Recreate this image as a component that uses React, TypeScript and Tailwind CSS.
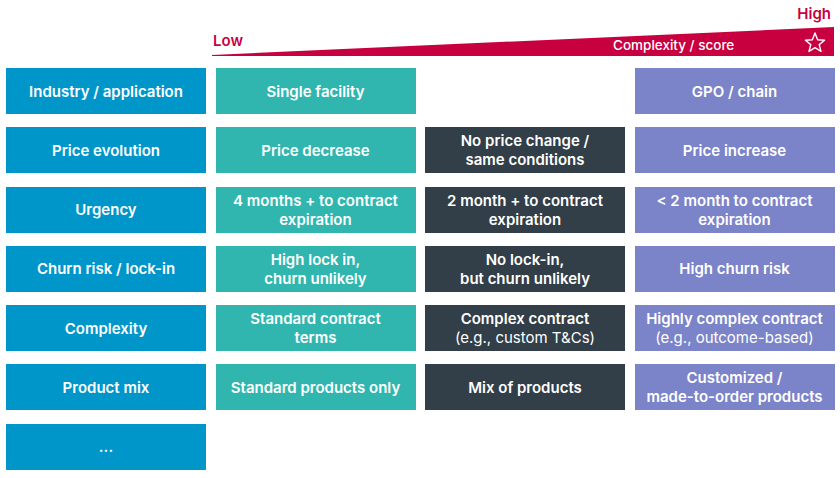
import type { ReactNode } from 'react'

const blue = 'bg-[#0096ca]'
const teal = 'bg-[#30b6af]'
const dark = 'bg-[#323e48]'
const purple = 'bg-[#7b83c9]'

type Cell = { text: ReactNode; color: string } | null

const rows: Cell[][] = [
  [
    { text: 'Industry / application', color: blue },
    { text: 'Single facility', color: teal },
    null,
    { text: 'GPO / chain', color: purple },
  ],
  [
    { text: 'Price evolution', color: blue },
    { text: 'Price decrease', color: teal },
    { text: <>No price change /<br />same conditions</>, color: dark },
    { text: 'Price increase', color: purple },
  ],
  [
    { text: 'Urgency', color: blue },
    { text: <>4 months + to contract<br />expiration</>, color: teal },
    { text: <>2 month + to contract<br />expiration</>, color: dark },
    { text: <>&lt; 2 month to contract<br />expiration</>, color: purple },
  ],
  [
    { text: 'Churn risk / lock-in', color: blue },
    { text: <>High lock in,<br />churn unlikely</>, color: teal },
    { text: <>No lock-in,<br />but churn unlikely</>, color: dark },
    { text: 'High churn risk', color: purple },
  ],
  [
    { text: 'Complexity', color: blue },
    { text: <>Standard contract<br />terms</>, color: teal },
    {
      text: <>Complex contract<br /><span className="font-normal">(e.g., custom T&amp;Cs)</span></>,
      color: dark,
    },
    {
      text: <>Highly complex contract<br /><span className="font-normal">(e.g., outcome-based)</span></>,
      color: purple,
    },
  ],
  [
    { text: 'Product mix', color: blue },
    { text: 'Standard products only', color: teal },
    { text: 'Mix of products', color: dark },
    { text: <>Customized /<br />made-to-order products</>, color: purple },
  ],
  [{ text: '...', color: blue }, null, null, null],
]

function Header() {
  return (
    <div className="relative h-[56px] ml-[212px] mr-[6px]">
      <svg className="absolute inset-0" width="622" height="56" viewBox="0 0 622 56">
        <polygon points="0,55 622,27 622,56 0,56" fill="#c8003f" />
        <polygon
          points="603,33 605.6,39.7 612.6,40.2 607.2,44.6 609,51.4 603,47.6 597,51.4 598.8,44.6 593.4,40.2 600.4,39.7"
          fill="none"
          stroke="#ffffff"
          strokeWidth="1.4"
          strokeLinejoin="round"
        />
      </svg>
      <span className="absolute left-[1px] top-[30px] text-[15px] font-semibold text-[#c8003f]">Low</span>
      <span className="absolute right-[3px] top-[3px] text-[15px] font-semibold text-[#c8003f]">High</span>
      <span className="absolute left-[401px] top-[35px] text-[13.5px] font-medium text-white">Complexity / score</span>
    </div>
  )
}

export default function App() {
  return (
    <div
      className="w-[840px] h-[478px] bg-white overflow-hidden"
      style={{ fontFamily: 'Inter, "Noto Sans", sans-serif' }}
    >
      <Header />
      <div className="grid grid-cols-[200px_200px_200px_200px] gap-x-[9.5px] gap-y-[13.3px] px-[6px] pt-[12px]">
        {rows.flat().map((cell, i) =>
          cell ? (
            <div
              key={i}
              className={`${cell.color} h-[46px] flex items-center justify-center text-center text-white text-[15px] font-semibold leading-[19px]`}
            >
              <div>{cell.text}</div>
            </div>
          ) : (
            <div key={i} />
          ),
        )}
      </div>
    </div>
  )
}
